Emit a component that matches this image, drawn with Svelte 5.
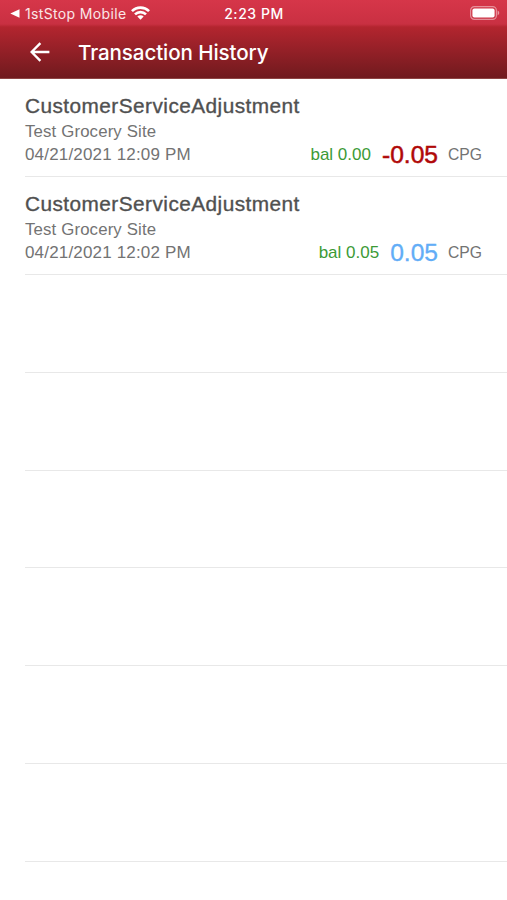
<script lang="ts">
	interface Transaction {
		title: string;
		site: string;
		date: string;
		balance: string;
		amount: string;
		unit: string;
	}

	const transactions: Transaction[] = [
		{
			title: 'CustomerServiceAdjustment',
			site: 'Test Grocery Site',
			date: '04/21/2021 12:09 PM',
			balance: '0.00',
			amount: '-0.05',
			unit: 'CPG'
		},
		{
			title: 'CustomerServiceAdjustment',
			site: 'Test Grocery Site',
			date: '04/21/2021 12:02 PM',
			balance: '0.05',
			amount: '0.05',
			unit: 'CPG'
		}
	];

	// Blank rows keep the separators going down the page
	const emptyRows = Array(6);
</script>

<div class="screen">
	<header>
		<div class="status-bar">
			<div class="status-left">
				<svg class="back-app" viewBox="0 0 10 9"><path d="M9.5 0.3v8.4L0.3 4.5z" fill="#fff" /></svg>
				<span class="app-name">1stStop Mobile</span>
				<svg class="wifi" viewBox="0 0 18 13">
					<g fill="none" stroke="#fff" stroke-width="2.5">
						<path d="M0.9 4.7a11.6 11.6 0 0 1 16.2 0" />
						<path d="M3.8 7.8a7.4 7.4 0 0 1 10.4 0" />
					</g>
					<path d="M9 12.8L6 9.8a4.3 4.3 0 0 1 6 0z" fill="#fff" />
				</svg>
			</div>
			<span class="time">2:23 PM</span>
			<div class="status-right">
				<svg class="battery" viewBox="0 0 30 14">
					<rect x="0.6" y="0.6" width="25.8" height="12.8" rx="3.8" fill="none" stroke="#fff" stroke-opacity="0.45" stroke-width="1.2" />
					<rect x="2.4" y="2.4" width="22.2" height="9.2" rx="2" fill="#fff" />
					<path d="M27.6 4.6c2.2 0.9 2.2 3.9 0 4.8z" fill="#fff" fill-opacity="0.5" />
				</svg>
			</div>
		</div>
		<div class="nav-bar">
			<button class="back" aria-label="Back">
				<svg viewBox="0 0 20 20">
					<path d="M19.4 10H1.8M10.4 1.2L1.6 10l8.8 8.8" fill="none" stroke="#fff" stroke-width="2.4" />
				</svg>
			</button>
			<h1>Transaction History</h1>
		</div>
	</header>

	<ul>
		{#each transactions as item}
			<li>
				<div class="title">{item.title}</div>
				<div class="site">{item.site}</div>
				<div class="details">
					<span class="date">{item.date}</span>
					<span class="balance">bal {item.balance}</span>
					<span class="amount" class:negative={item.amount.startsWith('-')}>{item.amount}</span>
					<span class="unit">{item.unit}</span>
				</div>
			</li>
		{/each}
		{#each emptyRows as _}
			<li></li>
		{/each}
	</ul>
</div>

<style>
	:global(body) {
		margin: 0;
		background: #fff;
	}

	.screen {
		height: 900px;
		overflow: hidden;
		background: #fff;
		font-family: 'Liberation Sans', Arial, sans-serif;
	}

	header {
		box-sizing: border-box;
		height: 79px;
		border-bottom: 1px solid #8e4444;
		background: linear-gradient(#d63649 0, #c93042 24px, #b3252f 27px, #701a1e 78px);
		color: #fff;
		font-family: Inter, sans-serif;
	}

	.status-bar {
		display: grid;
		grid-template-columns: 1fr auto 1fr;
		align-items: center;
		height: 26px;
		padding: 0 7px 0 10px;
		font-size: 14px;
		line-height: 24px;
	}

	.status-left {
		display: flex;
		align-items: center;
	}

	.back-app {
		width: 10px;
		height: 9px;
		margin-right: 5px;
	}

	.app-name {
		padding-top: 2px;
		letter-spacing: 0.35px;
		color: #fbe6e8;
	}

	.wifi {
		width: 19px;
		height: 14px;
		margin-left: 5px;
	}

	.time {
		margin-left: -2px;
		padding-top: 2px;
		font-weight: 500;
		letter-spacing: 0.55px;
	}

	.status-right {
		display: flex;
		justify-content: flex-end;
	}

	.battery {
		width: 30px;
		height: 14px;
	}

	.nav-bar {
		display: flex;
		align-items: center;
		height: 52px;
		padding-left: 30px;
	}

	.back {
		width: 20px;
		height: 20px;
		margin: 0 28px 0 0;
		padding: 0;
		border: 0;
		background: none;
	}

	.back svg {
		display: block;
	}

	h1 {
		margin: 0;
		padding-top: 1px;
		font-size: 20.6px;
		font-weight: 500;
		line-height: 26px;
		letter-spacing: -0.1px;
	}

	ul {
		margin: 0;
		padding: 0.7px 0 0 25px;
		list-style: none;
	}

	li {
		box-sizing: border-box;
		height: 97.75px;
		padding: 13.5px 25px 0 0;
		border-bottom: 1px solid #e8e8e8;
	}

	.title {
		font-size: 20.8px;
		line-height: 25px;
		letter-spacing: 0.45px;
		color: #505050;
		-webkit-text-stroke: 0.35px #505050;
	}

	.site {
		margin-top: 2px;
		font-size: 16.8px;
		line-height: 24px;
		letter-spacing: 0.15px;
		color: #737373;
	}

	.details {
		display: flex;
		align-items: center;
		height: 21px;
		font-size: 17px;
		line-height: 21px;
		color: #737373;
	}

	.date {
		flex: 1;
		letter-spacing: 0.17px;
	}

	.balance {
		color: #3c9a36;
	}

	.amount {
		margin: 0 10px 0 11px;
		font-size: 24.6px;
		color: #62adf7;
		-webkit-text-stroke: 0.3px #62adf7;
	}

	.amount.negative {
		color: #b00808;
		-webkit-text-stroke: 0.5px #b00808;
	}

	.unit {
		font-size: 15.7px;
	}
</style>
